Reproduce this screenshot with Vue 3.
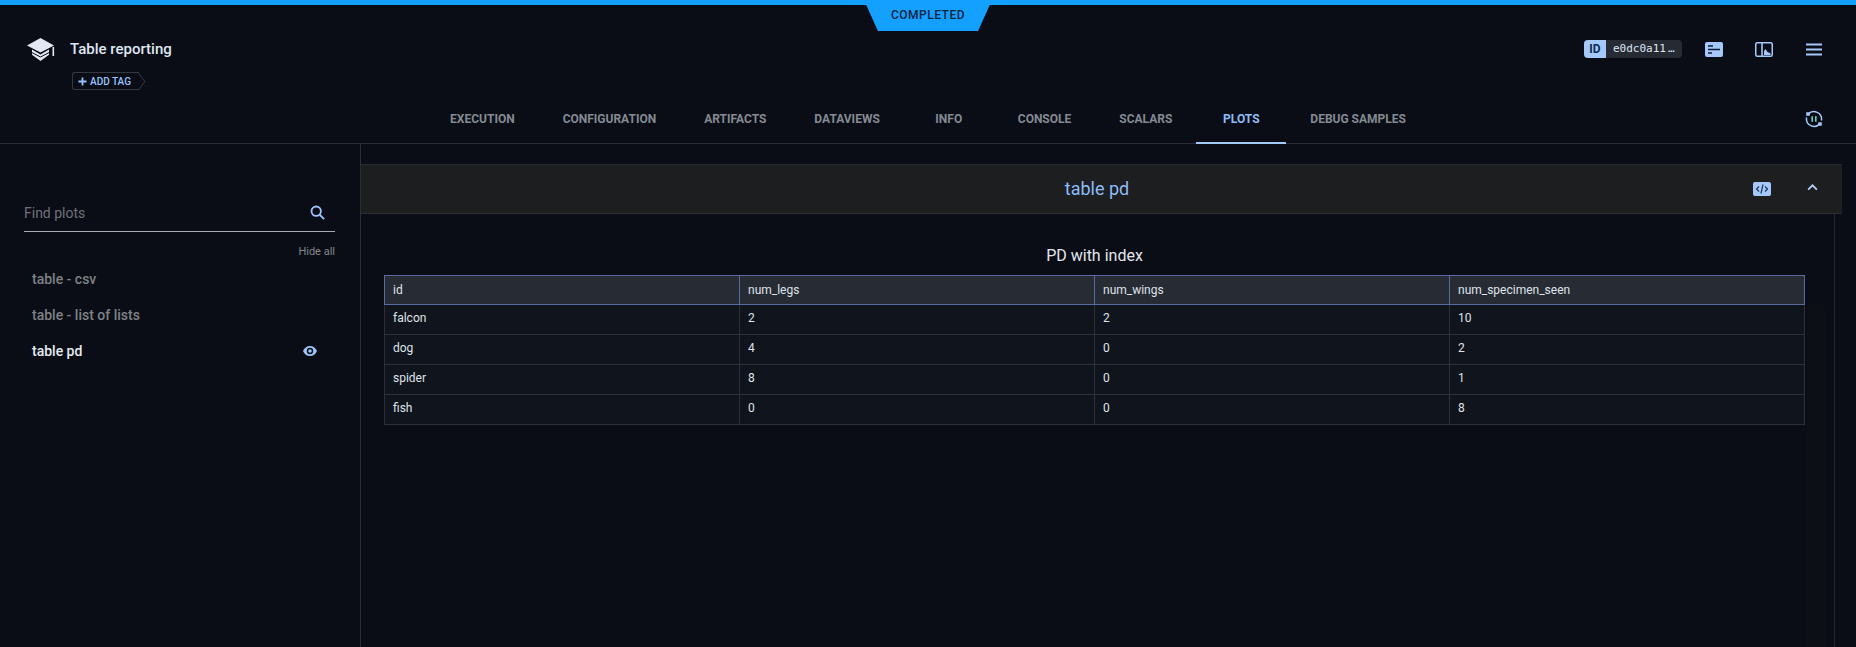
<script setup>
const tabs = ['EXECUTION','CONFIGURATION','ARTIFACTS','DATAVIEWS','INFO','CONSOLE','SCALARS','PLOTS','DEBUG SAMPLES']
const plots = [
  { name: 'table - csv', active: false },
  { name: 'table - list of lists', active: false },
  { name: 'table pd', active: true }
]
const columns = ['id','num_legs','num_wings','num_specimen_seen']
const rows = [
  ['falcon','2','2','10'],
  ['dog','4','0','2'],
  ['spider','8','0','1'],
  ['fish','0','0','8']
]
</script>

<template>
  <div class="page">
    <header class="header">
      <div class="status-line"><div class="status">COMPLETED</div></div>
      <div class="top">
        <svg class="cap" viewBox="0 0 28 24" width="28" height="24">
          <path d="M13.5 0 27 7.4 13.5 14.6 0 7.4Z" fill="#e3e8f3"/>
          <path d="M5 11.6 13.5 16.4 22 11.6V16.8L13.5 23 5 16.8Z" fill="#e3e8f3"/>
          <path d="M5 14.6 13.5 19 22 14.6" fill="none" stroke="#0a0d15" stroke-width="1"/>
          <rect x="25.5" y="9" width="1.6" height="9" fill="#e3e8f3"/>
        </svg>
        <div class="title-block">
          <div class="title">Table reporting</div>
          <div class="tag">
            <svg viewBox="0 0 10 10" width="9" height="9"><path d="M5 .5v9M.5 5h9" stroke="#9cc3fa" stroke-width="2"/></svg>
            <span>ADD TAG</span>
          </div>
        </div>
        <div class="actions">
          <div class="id-badge"><span class="id-label">ID</span><span class="id-value">e0dc0a11 …</span></div>
          <svg class="act-1" viewBox="0 0 18 15" width="18" height="15">
            <rect width="18" height="15" rx="2" fill="#a4c8fa"/>
            <path d="M3 4h5M3 7.5h12M3 11h4" stroke="#0c1830" stroke-width="1.5"/>
          </svg>
          <svg class="act-2" viewBox="0 0 18 15" width="18" height="15">
            <rect x=".75" y=".75" width="16.5" height="13.5" rx="1.5" fill="none" stroke="#a4c8fa" stroke-width="1.5"/>
            <path d="M7 1v13" stroke="#a4c8fa" stroke-width="1.6"/>
            <path d="M9 13V9l1.5-2 1.5 2.5 1.5 1 2 .5v2Z" fill="#a4c8fa"/>
          </svg>
          <svg class="act-3" viewBox="0 0 17 13" width="17" height="13">
            <path d="M0 1.5h16M0 6.5h16M0 11.5h16" stroke="#a4c8fa" stroke-width="2"/>
          </svg>
        </div>
      </div>
      <div class="nav">
        <nav class="tabs">
          <div v-for="t in tabs" :key="t" class="tab" :class="{ active: t === 'PLOTS' }">{{ t }}</div>
        </nav>
        <svg class="refresh" viewBox="0 0 18 18" width="18" height="18">
          <path d="M3.2 4.2A7.6 7.6 0 0 1 16.4 10.5M14.800 13.800A7.600 7.600 0 0 1 1.600 7.500" fill="none" stroke="#a4c8fa" stroke-width="1.5"/>
          <path d="M1.200 2.200h3.600v3.600h-3.600ZM13.200 12.200h3.600v3.600h-3.600Z" fill="#a4c8fa"/>
          <path d="M7.200 6.300v5.400M10.800 6.300v5.400" stroke="#6fd0bd" stroke-width="1.6"/>
        </svg>
      </div>
    </header>

    <main class="main">
      <aside class="sidebar">
        <div class="search">
          <input class="search-input" placeholder="Find plots" />
          <svg viewBox="0 0 16 16" width="15" height="15">
            <circle cx="6.600" cy="6.600" r="5" fill="none" stroke="#9cc3fa" stroke-width="2"/>
            <path d="M10.400 10.400 15 15" stroke="#9cc3fa" stroke-width="2"/>
          </svg>
        </div>
        <div class="hide-all">Hide all</div>
        <ul class="plot-list">
          <li v-for="p in plots" :key="p.name" class="plot" :class="{ on: p.active }">
            <span>{{ p.name }}</span>
            <svg v-if="p.active" viewBox="0 0 14 10" width="14" height="10">
              <path fill-rule="evenodd" d="M7 0C3.800 0 1.200 2 0 5c1.200 3 3.800 5 7 5s5.800-2 7-5c-1.200-3-3.800-5-7-5Zm0 8.200a3.200 3.200 0 1 1 0-6.400 3.200 3.200 0 0 1 0 6.400ZM7 3.200a1.800 1.800 0 1 0 0 3.600 1.800 1.800 0 0 0 0-3.600Z" fill="#9cc3fa"/>
            </svg>
          </li>
        </ul>
      </aside>

      <section class="content">
        <div class="panel-head">
          <div class="panel-title">table pd</div>
          <div class="panel-icons">
            <svg viewBox="0 0 18 14" width="18" height="14">
              <rect width="18" height="14" rx="2" fill="#a4c8fa"/>
              <path d="M6 4.500 3.500 7 6 9.500M12 4.500 14.500 7 12 9.500" fill="none" stroke="#22344f" stroke-width="1.200"/>
              <path d="M10 2.500 8 11.500" stroke="#22344f" stroke-width="1.200"/>
            </svg>
            <svg class="chev" viewBox="0 0 12 8" width="11" height="7">
              <path d="M1 6.500 6 1.500l5 5" fill="none" stroke="#b5d2fb" stroke-width="2"/>
            </svg>
          </div>
        </div>
        <div class="panel-body">
          <div class="strip"></div>
          <h3 class="chart-title">PD with index</h3>
          <table class="data">
            <thead>
              <tr><th v-for="c in columns" :key="c">{{ c }}</th></tr>
            </thead>
            <tbody>
              <tr v-for="r in rows" :key="r[0]"><td v-for="(v, i) in r" :key="i">{{ v }}</td></tr>
            </tbody>
          </table>
        </div>
      </section>
    </main>
  </div>
</template>

<style>
html, body { margin: 0; background: #0a0d15; overflow: hidden; }
</style>

<style scoped>
.page {
  width: 1856px;
  height: 647px;
  display: flex;
  flex-direction: column;
  background: #0a0d15;
  font-family: Roboto, "Liberation Sans", sans-serif;
  overflow: hidden;
}
.header {
  height: 144px;
  box-sizing: border-box;
  border-bottom: 1px solid #2a2d36;
  flex: none;
  display: flex;
  flex-direction: column;
}
.status-line {
  height: 5px;
  background: #14a0ff;
  position: relative;
  flex: none;
}
.status {
  position: absolute;
  top: 0;
  left: 864px;
  width: 128px;
  height: 31px;
  background: #14a0ff;
  clip-path: polygon(0 0, 100% 0, 89.100% 100%, 10.900% 100%);
  color: #0b2440;
  font-size: 12px;
  font-weight: 500;
  letter-spacing: .5px;
  text-align: center;
  line-height: 31px;
}
.top {
  height: 95px;
  flex: none;
  box-sizing: border-box;
  display: flex;
  align-items: flex-start;
  padding: 33px 0 0 27px;
}
.cap { flex: none; }
.title-block { margin-left: 15px; }
.title {
  color: #dfe6f3;
  font-size: 15px;
  font-weight: 500;
  line-height: 20px;
  margin-top: 1px;
}
.tag {
  margin: 13px 0 0 2px;
  width: 67px;
  height: 18px;
  box-sizing: border-box;
  display: flex;
  align-items: center;
  gap: 3px;
  padding-left: 5px;
  border: 1px solid #343842;
  border-right: 0;
  border-radius: 3px 0 0 3px;
  position: relative;
  color: #9cc3fa;
  font-size: 10px;
  font-weight: 500;
}
.tag::after {
  content: "";
  position: absolute;
  right: -6px;
  top: 2px;
  width: 12px;
  height: 12px;
  border-top: 1px solid #343842;
  border-right: 1px solid #343842;
  transform: scaleX(.75) rotate(45deg);
}
.actions {
  margin-left: auto;
  display: flex;
  align-items: center;
  height: 18px;
  margin-top: 2px;
  padding-right: 33px;
}
.id-badge {
  display: flex;
  width: 98px;
  height: 18px;
  border-radius: 4px;
  overflow: hidden;
  background: #262a33;
  flex: none;
}
.id-label {
  flex: none;
  width: 22px;
  background: #a4c8fa;
  color: #0e2a55;
  font-size: 12px;
  font-weight: 700;
  text-align: center;
  line-height: 18px;
}
.id-value {
  padding-left: 7px;
  color: #dfe6f3;
  font-family: "DejaVu Sans Mono", "Liberation Mono", monospace;
  font-size: 11px;
  line-height: 18px;
  white-space: pre;
  word-spacing: -4.5px;
}
.act-1 { margin-left: 23px; flex: none; }
.act-2 { margin-left: 32px; flex: none; }
.act-3 { margin-left: 33px; flex: none; }
.nav {
  flex: 1;
  display: flex;
  position: relative;
  justify-content: center;
}
.tabs {
  display: flex;
  height: 44px;
}
.tab {
  min-width: 90px;
  box-sizing: border-box;
  padding: 0 24px;
  text-align: center;
  color: #848a93;
  font-size: 12px;
  font-weight: 700;
  line-height: 38px;
  white-space: nowrap;
  border-bottom: 2px solid transparent;
  height: 44px;
}
.tab.active {
  color: #8fbcf7;
  border-bottom-color: #a4c8fa;
}
.refresh {
  position: absolute;
  right: 33px;
  top: 10px;
}
.main { flex: 1; display: flex; min-height: 0; }
.sidebar {
  width: 361px;
  box-sizing: border-box;
  flex: none;
  border-right: 1px solid #2a2d36;
  padding: 55px 25px 0 24px;
}
.search {
  height: 33px;
  box-sizing: border-box;
  border-bottom: 1px solid #a9acb2;
  display: flex;
  align-items: center;
  padding: 0 10px 5px 0;
}
.search-input {
  flex: 1;
  min-width: 0;
  border: 0;
  outline: 0;
  background: transparent;
  padding: 0;
  font: 400 14px Roboto, sans-serif;
  color: #dfe6f3;
}
.search-input::placeholder { color: #6f7278; opacity: 1; }
.hide-all {
  margin-top: 13px;
  text-align: right;
  color: #85888e;
  font-size: 11px;
  line-height: 14px;
}
.plot-list { list-style: none; margin: 2px 0 0; padding: 0 0 0 8px; }
.plot {
  height: 36px;
  display: flex;
  align-items: center;
  justify-content: space-between;
  padding-right: 18px;
  color: #7f8186;
  font-size: 14px;
  font-weight: 500;
}
.plot.on { color: #e6eaf2; }
.content { flex: 1; min-width: 0; padding-top: 20px; }
.panel-head {
  width: 1481px;
  height: 50px;
  box-sizing: border-box;
  background: #1d1e20;
  border-top: 1px solid #26282c;
  border-bottom: 1px solid #2b2d31;
  display: flex;
  align-items: center;
  position: relative;
}
.panel-title {
  width: 1472px;
  text-align: center;
  color: #8fbcf7;
  font-size: 18px;
  font-weight: 400;
  margin-top: -1px;
}
.panel-icons {
  position: absolute;
  right: 24px;
  top: 0;
  bottom: 0;
  display: flex;
  align-items: center;
}
.chev { margin-left: 36px; margin-top: -3px; }
.panel-body {
  width: 1474px;
  height: 433px;
  box-sizing: border-box;
  border-right: 1px solid #26282f;
  padding: 32px 0 0 23px;
  position: relative;
}
.strip {
  position: absolute;
  left: 1446px;
  top: 91px;
  width: 18px;
  bottom: 0;
  background: #0c0f16;
}
.chart-title {
  margin: 0 0 9px;
  width: 1421px;
  text-align: center;
  color: #e3e6ec;
  font-size: 16px;
  font-weight: 400;
  line-height: 20px;
}
.data {
  position: relative;
  width: 1421px;
  table-layout: fixed;
  border-collapse: collapse;
  color: #dfe3ea;
  font-size: 12px;
}
.data th, .data td {
  box-sizing: border-box;
  text-align: left;
  font-weight: 400;
  padding: 0 8px;
}
.data th {
  height: 29px;
  background: #272b34;
  border: 1px solid #586a9e;
}
.data td {
  height: 30px;
  padding-bottom: 3px;
  background: #10141c;
  border: 1px solid #2d3039;
}
.data tbody tr:first-child td { border-top-color: #586a9e; }
</style>
